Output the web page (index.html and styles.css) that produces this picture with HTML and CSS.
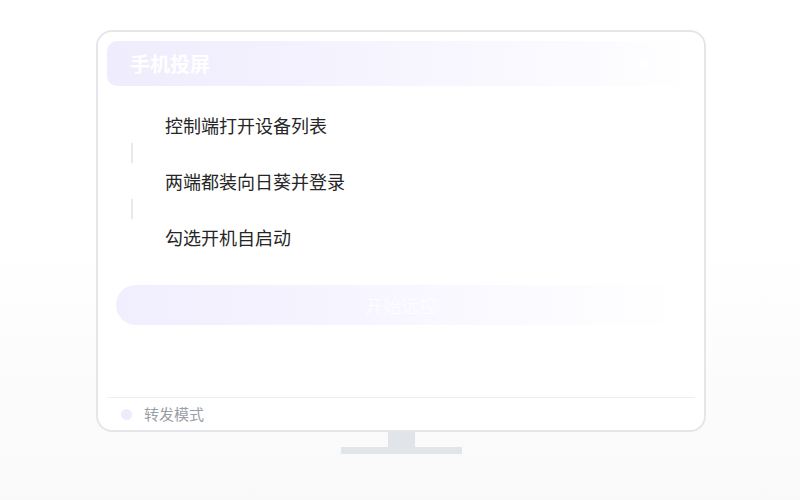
FILE: index.html
```html
<!DOCTYPE html>
<html lang="zh-CN">
<head>
<meta charset="utf-8">
<title>手机投屏</title>
<link rel="stylesheet" href="styles.css">
</head>
<body>
<div class="scene">
  <div class="monitor">
    <div class="screen">
      <div class="header">
        <span class="title">手机投屏</span>
        <span class="dots"><i></i><i></i><i></i></span>
      </div>
      <div class="content">
        <ol class="steps">
          <li class="step"><span class="num"></span><span class="label">控制端打开设备列表</span></li>
          <li class="connector"><span class="line"></span></li>
          <li class="step"><span class="num"></span><span class="label">两端都装向日葵并登录</span></li>
          <li class="connector"><span class="line"></span></li>
          <li class="step"><span class="num"></span><span class="label">勾选开机自启动</span></li>
        </ol>
        <div class="btn">开始远控</div>
      </div>
      <div class="footer">
        <span class="dot"></span>
        <span class="mode">转发模式</span>
      </div>
    </div>
  </div>
  <div class="stand">
    <div class="neck"></div>
    <div class="base"></div>
  </div>
</div>
</body>
</html>
```
FILE: styles.css
```css
html, body {
  margin: 0;
  padding: 0;
}
body {
  width: 800px;
  height: 500px;
  background: linear-gradient(180deg, #ffffff 0%, #ffffff 48%, #f9f9fa 100%);
  font-family: "Noto Sans CJK SC", "Noto Sans", sans-serif;
  overflow: hidden;
}
.scene {
  display: flex;
  flex-direction: column;
  align-items: center;
  padding-top: 30px;
  padding-left: 2px;
}
.monitor {
  width: 610px;
  height: 402px;
  box-sizing: border-box;
  border: 2px solid #e4e6ea;
  border-radius: 16px;
  background: #ffffff;
  display: flex;
  flex-direction: column;
}
.screen {
  flex: 1;
  display: flex;
  flex-direction: column;
  padding: 9px 9px 0 9px;
}
.header {
  height: 45px;
  border-radius: 10px;
  background: linear-gradient(90deg, #efecfd 0%, #f5f3fe 40%, rgba(250, 249, 255, 0.6) 85%, rgba(255,255,255,0) 100%);
  display: flex;
  align-items: center;
  justify-content: space-between;
  padding: 0 14px 0 23px;
}
.title {
  color: #ffffff;
  font-size: 20px;
  font-weight: 700;
  line-height: 26px;
}
.dots {
  display: flex;
  gap: 6px;
}
.dots i {
  width: 10px;
  height: 10px;
  border-radius: 50%;
  background: rgba(255, 255, 255, 0.35);
}
.content {
  flex: 1;
  display: flex;
  flex-direction: column;
}
.steps {
  list-style: none;
  margin: 27px 0 0 0;
  padding: 0 0 0 15px;
}
.step {
  display: flex;
  align-items: center;
  height: 24px;
  gap: 23px;
}
.num {
  width: 20px;
  height: 20px;
  border-radius: 50%;
  background: #ffffff;
}
.label {
  font-size: 18px;
  color: #262626;
  line-height: 24px;
}
.connector {
  height: 32px;
  display: flex;
  align-items: center;
  width: 20px;
  justify-content: center;
}
.line {
  width: 2px;
  height: 20px;
  background: #e6e8ec;
}
.btn {
  margin: 36px 9px 0 9px;
  height: 40px;
  border-radius: 20px;
  background: linear-gradient(90deg, #f1eefe 0%, #f7f5ff 45%, #fbfaff 70%, rgba(255,255,255,0) 100%);
  color: #ffffff;
  font-size: 18px;
  font-weight: 300;
  display: flex;
  align-items: center;
  justify-content: center;
}
.footer {
  height: 32px;
  border-top: 1px solid #eceef1;
  display: flex;
  align-items: center;
  padding-left: 14px;
  gap: 12px;
}
.dot {
  width: 11px;
  height: 11px;
  border-radius: 50%;
  background: #efebfd;
}
.mode {
  font-size: 15px;
  color: #9a9ea6;
  line-height: 20px;
}
.stand {
  display: flex;
  flex-direction: column;
  align-items: center;
}
.neck {
  width: 27px;
  height: 15px;
  background: #e1e4e8;
}
.base {
  width: 121px;
  height: 7px;
  background: #e1e4e8;
}
```
